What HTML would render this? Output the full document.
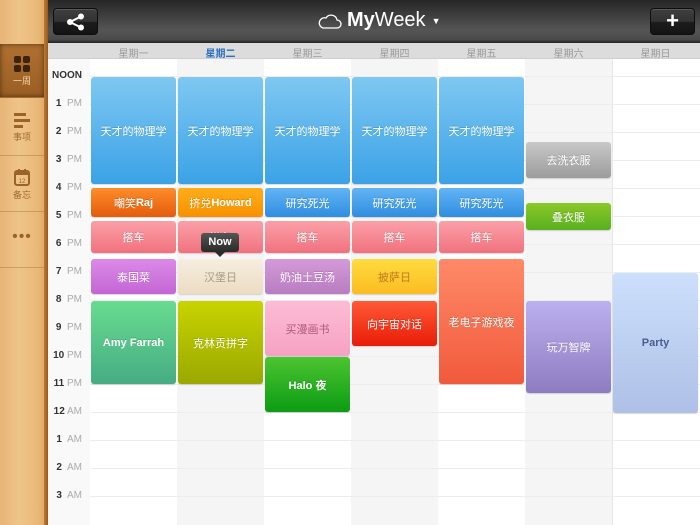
<!DOCTYPE html>
<html><head><meta charset="utf-8"><style>
*{margin:0;padding:0;box-sizing:border-box}
body{width:700px;height:525px;overflow:hidden;position:relative;background:#fff;font-family:"Liberation Sans","Noto Sans CJK SC",sans-serif}
.abs{position:absolute}
#side{left:0;top:0;width:48px;height:525px;background:linear-gradient(90deg,#e6b577,#efc488 40%,#e8b878 80%,#d9a060);}
#side:after{content:"";position:absolute;right:0;top:0;width:4px;height:525px;background:linear-gradient(90deg,#c07a2c,#9a5a1c)}
.sitem{position:absolute;left:0;width:44px;height:56px;border-bottom:1px solid rgba(150,95,35,.35);text-align:center;font-size:9px;color:#a06a30}
#top{left:48px;top:0;width:652px;height:43px;background:linear-gradient(#262626,#3a3a3a 30%,#555 70%,#4a4a4a 92%,#222)}
.btn{position:absolute;top:8px;width:45px;height:27px;border-radius:4px;background:linear-gradient(#3e3e3e,#333 50%,#1c1c1c 52%,#141414);border:1px solid #0d0d0d;box-shadow:inset 0 1px 0 rgba(255,255,255,.15)}
#dh{left:48px;top:43px;width:652px;height:16px;background:#dcdcdc;border-bottom:1px solid #cfcfcf}
.dl{position:absolute;top:2px;width:87px;text-align:center;font-size:10px;color:#9a9a9a}
.col{position:absolute;top:59px;width:87px;height:466px}
.hl{position:absolute;left:90px;width:610px;height:1px;background:#ededed}
.tl{position:absolute;left:48px;width:40px;text-align:right;font-size:10px;color:#aaa;padding-right:6px}
.tl b{color:#333}
.ev{position:absolute;border-radius:3px;color:#fff;font-size:11px;display:flex;align-items:center;justify-content:center;text-shadow:0 -1px 0 rgba(0,0,0,.15);box-shadow:0 1px 1px rgba(0,0,0,.15)}
</style></head><body>
<div id="side" class="abs"></div>
<div class="sitem" style="top:44px;height:54px;background:linear-gradient(#b07030,#9a5f24);box-shadow:inset 0 0 6px rgba(0,0,0,.5);color:#f6d9a8">
<svg width="16" height="16" style="margin-top:12px" viewBox="0 0 16 16"><rect x="0" y="0" width="7" height="7" rx="2" fill="#3a2410"/><rect x="9" y="0" width="7" height="7" rx="2" fill="#3a2410"/><rect x="0" y="9" width="7" height="7" rx="2" fill="#3a2410"/><rect x="9" y="9" width="7" height="7" rx="2" fill="#3a2410"/></svg><div style="margin-top:0">一周</div></div>
<div class="sitem" style="top:98px;height:58px"><svg width="16" height="16" style="margin-top:14px" viewBox="0 0 16 16"><rect x="0" y="1" width="12" height="3" fill="#9a6428"/><rect x="0" y="7" width="16" height="3" fill="#9a6428"/><rect x="0" y="13" width="9" height="3" fill="#9a6428"/></svg><div>事项</div></div>
<div class="sitem" style="top:156px;height:56px"><svg width="16" height="17" style="margin-top:13px" viewBox="0 0 16 17"><rect x="1" y="2" width="14" height="14" rx="2" fill="none" stroke="#9a6428" stroke-width="2"/><rect x="1" y="2" width="14" height="4" fill="#9a6428"/><rect x="4" y="0" width="2" height="4" fill="#9a6428"/><rect x="10" y="0" width="2" height="4" fill="#9a6428"/><text x="8" y="14" font-size="6" text-anchor="middle" fill="#9a6428">12</text></svg><div>备忘</div></div>
<div class="sitem" style="top:212px;height:56px;font-size:16px;line-height:50px;color:#9a6428;letter-spacing:1px">•••</div>
<div id="top" class="abs">
<div class="btn" style="left:5px"><svg width="20" height="18" viewBox="0 0 20 18" style="margin:4px 12px"><circle cx="15" cy="3.5" r="3" fill="#fff"/><circle cx="4" cy="9" r="3" fill="#fff"/><circle cx="15" cy="14.5" r="3" fill="#fff"/><path d="M15 3.5L4 9L15 14.5" stroke="#fff" stroke-width="2" fill="none"/></svg></div>
<div class="abs" style="left:270px;top:9px;color:#fff;font-size:20px;display:flex;align-items:center"><svg width="24" height="16" viewBox="0 0 24 16"><path d="M5 15H19A4 4 0 0 0 19 7A6 6 0 0 0 8 5A5 5 0 0 0 5 15Z" fill="none" stroke="#fff" stroke-width="1.3"/></svg><span style="margin-left:5px"><b>My</b>Week</span><span style="font-size:9px;margin-left:6px">▼</span></div>
<div class="btn" style="left:602px;color:#fff;font-size:22px;font-weight:bold;text-align:center;line-height:24px">+</div>
</div>
<div id="dh" class="abs">
<div class="dl" style="left:42px">星期一</div><div class="dl" style="left:129px;color:#2a6fc0;font-weight:bold">星期二</div><div class="dl" style="left:216px">星期三</div><div class="dl" style="left:303px">星期四</div><div class="dl" style="left:390px">星期五</div><div class="dl" style="left:477px">星期六</div><div class="dl" style="left:564px">星期日</div>
</div>
<div class="abs" style="left:48px;top:59px;width:42px;height:466px;background:#f9f9f9"></div>
<div class="col" style="left:90px;background:#fff"></div>
<div class="col" style="left:177px;background:#f5f5f5"></div>
<div class="col" style="left:264px;background:#fff"></div>
<div class="col" style="left:351px;background:#f5f5f5"></div>
<div class="col" style="left:438px;background:#fff"></div>
<div class="col" style="left:525px;background:#f5f5f5"></div>
<div class="col" style="left:612px;background:#fff;border-left:1px solid #e6e6e6"></div>
<div class="hl" style="top:76px"></div><div class="hl" style="top:104px"></div><div class="hl" style="top:132px"></div><div class="hl" style="top:160px"></div><div class="hl" style="top:188px"></div><div class="hl" style="top:216px"></div><div class="hl" style="top:244px"></div><div class="hl" style="top:272px"></div><div class="hl" style="top:300px"></div><div class="hl" style="top:328px"></div><div class="hl" style="top:356px"></div><div class="hl" style="top:384px"></div><div class="hl" style="top:412px"></div><div class="hl" style="top:440px"></div><div class="hl" style="top:468px"></div><div class="hl" style="top:496px"></div>
<div class="tl" style="top:70px;font-weight:bold;color:#333">NOON</div>
<div class="tl" style="top:98px"><b>1</b>&nbsp; PM</div><div class="tl" style="top:126px"><b>2</b>&nbsp; PM</div><div class="tl" style="top:154px"><b>3</b>&nbsp; PM</div><div class="tl" style="top:182px"><b>4</b>&nbsp; PM</div><div class="tl" style="top:210px"><b>5</b>&nbsp; PM</div><div class="tl" style="top:238px"><b>6</b>&nbsp; PM</div><div class="tl" style="top:266px"><b>7</b>&nbsp; PM</div><div class="tl" style="top:294px"><b>8</b>&nbsp; PM</div><div class="tl" style="top:322px"><b>9</b>&nbsp; PM</div><div class="tl" style="top:350px"><b>10</b> PM</div><div class="tl" style="top:378px"><b>11</b> PM</div><div class="tl" style="top:406px"><b>12</b> AM</div><div class="tl" style="top:434px"><b>1</b>&nbsp; AM</div><div class="tl" style="top:462px"><b>2</b>&nbsp; AM</div><div class="tl" style="top:490px"><b>3</b>&nbsp; AM</div>

<div class="ev" style="left:91px;top:77px;width:85px;height:107px;background:linear-gradient(#7ec8f2,#3ba2e6)">天才的物理学</div>
<div class="ev" style="left:178px;top:77px;width:85px;height:107px;background:linear-gradient(#7ec8f2,#3ba2e6)">天才的物理学</div>
<div class="ev" style="left:265px;top:77px;width:85px;height:107px;background:linear-gradient(#7ec8f2,#3ba2e6)">天才的物理学</div>
<div class="ev" style="left:352px;top:77px;width:85px;height:107px;background:linear-gradient(#7ec8f2,#3ba2e6)">天才的物理学</div>
<div class="ev" style="left:439px;top:77px;width:85px;height:107px;background:linear-gradient(#7ec8f2,#3ba2e6)">天才的物理学</div>
<div class="ev" style="left:91px;top:188px;width:85px;height:29px;background:linear-gradient(#ff8c2a,#e35c0c)">嘲笑<b>Raj</b></div>
<div class="ev" style="left:178px;top:188px;width:85px;height:29px;background:linear-gradient(#ffae1a,#f79000)">挤兑<b>Howard</b></div>
<div class="ev" style="left:265px;top:188px;width:85px;height:29px;background:linear-gradient(#62b4f4,#2f8ee0)">研究死光</div>
<div class="ev" style="left:352px;top:188px;width:85px;height:29px;background:linear-gradient(#62b4f4,#2f8ee0)">研究死光</div>
<div class="ev" style="left:439px;top:188px;width:85px;height:29px;background:linear-gradient(#62b4f4,#2f8ee0)">研究死光</div>
<div class="ev" style="left:91px;top:221px;width:85px;height:32px;background:linear-gradient(#fba0a8,#f0727e)">搭车</div>
<div class="ev" style="left:178px;top:221px;width:85px;height:32px;background:linear-gradient(#fba0a8,#f0727e)">搭车</div>
<div class="ev" style="left:265px;top:221px;width:85px;height:32px;background:linear-gradient(#fba0a8,#f0727e)">搭车</div>
<div class="ev" style="left:352px;top:221px;width:85px;height:32px;background:linear-gradient(#fba0a8,#f0727e)">搭车</div>
<div class="ev" style="left:439px;top:221px;width:85px;height:32px;background:linear-gradient(#fba0a8,#f0727e)">搭车</div>
<div class="ev" style="left:91px;top:259px;width:85px;height:35px;background:linear-gradient(#dc8ae8,#c266d4)">泰国菜</div>
<div class="ev" style="left:178px;top:259px;width:85px;height:35px;background:linear-gradient(#f7eee0,#ecdcc2);color:#a89a88;text-shadow:none">汉堡日</div>
<div class="ev" style="left:265px;top:259px;width:85px;height:35px;background:linear-gradient(#d49ad8,#b87cc2)">奶油土豆汤</div>
<div class="ev" style="left:352px;top:259px;width:85px;height:35px;background:linear-gradient(#ffdc40,#fbbc20);color:#c07a20;text-shadow:none">披萨日</div>
<div class="ev" style="left:439px;top:259px;width:85px;height:125px;background:linear-gradient(#ff8a68,#f05a3c)">老电子游戏夜</div>
<div class="ev" style="left:91px;top:301px;width:85px;height:83px;background:linear-gradient(#68dc90,#46ac84);font-weight:bold">Amy Farrah</div>
<div class="ev" style="left:178px;top:301px;width:85px;height:83px;background:linear-gradient(#c8d400,#9aa800)">克林贡拼字</div>
<div class="ev" style="left:265px;top:301px;width:85px;height:55px;background:linear-gradient(#fcbcd4,#f6a2c2);color:#b0587a;text-shadow:none">买漫画书</div>
<div class="ev" style="left:265px;top:357px;width:85px;height:55px;background:linear-gradient(#4cc430,#0c9c14);font-weight:bold">Halo 夜</div>
<div class="ev" style="left:352px;top:301px;width:85px;height:45px;background:linear-gradient(#ff5a38,#e81c08)">向宇宙对话</div>
<div class="ev" style="left:526px;top:142px;width:85px;height:36px;background:linear-gradient(#c8c8c8,#9c9c9c)">去洗衣服</div>
<div class="ev" style="left:526px;top:203px;width:85px;height:27px;background:linear-gradient(#8cc828,#58b020)">叠衣服</div>
<div class="ev" style="left:526px;top:301px;width:85px;height:92px;background:linear-gradient(#bcb0f0,#8e7cc0)">玩万智牌</div>
<div class="ev" style="left:613px;top:273px;width:85px;height:140px;background:linear-gradient(#cce0fc,#aec0e6);color:#4a5e90;text-shadow:none;font-weight:bold">Party</div>
<div class="abs" style="left:201px;top:233px;width:38px;height:19px;border-radius:3px;background:linear-gradient(#555,#2a2a2a);color:#fff;font-size:11px;font-weight:bold;text-align:center;line-height:19px">Now</div>
<div class="abs" style="left:215px;top:252px;width:0;height:0;border-left:5px solid transparent;border-right:5px solid transparent;border-top:5px solid #2a2a2a"></div>
</body></html>
